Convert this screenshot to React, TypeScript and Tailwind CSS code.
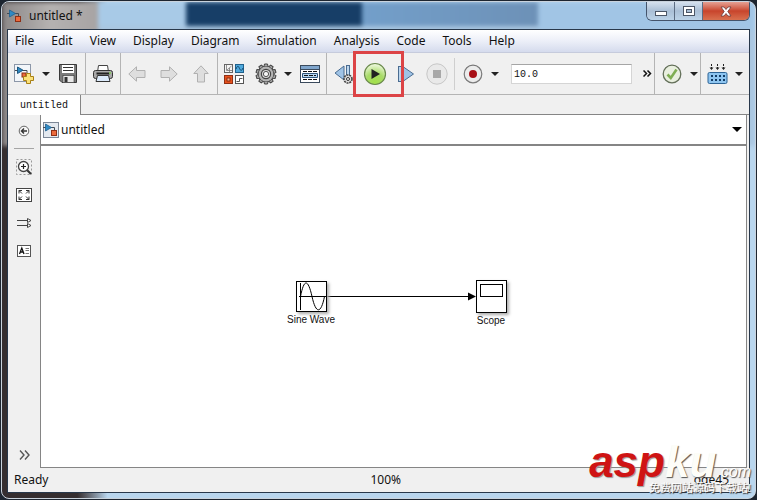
import { useState } from 'react';
import type { ReactNode } from 'react';

const MENUS = [
  'File',
  'Edit',
  'View',
  'Display',
  'Diagram',
  'Simulation',
  'Analysis',
  'Code',
  'Tools',
  'Help',
];

const GEAR_TEETH = [0, 36, 72, 108, 144, 180, 216, 252, 288, 324];

const ModelIcon = ({ boxed = false }: { boxed?: boolean }) => (
  <svg width="16" height="16" viewBox="0 0 16 16" className="shrink-0" aria-hidden="true">
    {boxed && <rect x=".5" y=".5" width="15" height="15" fill="#e4e9ef" stroke="#7d8796" />}
    <path d="M0 5.500H3M8 5.500H11.500V9" fill="none" stroke="#444b55" />
    <path d="M2.500 2V9L8.500 5.500Z" fill="#2f8ac4" stroke="#1f5f8f" strokeWidth=".8" />
    <rect x="8.500" y="8.500" width="5" height="5" fill="#ec6a3c" stroke="#8f3015" />
  </svg>
);

const NewModelIcon = () => (
  <svg width="20" height="20" viewBox="0 0 20 20" aria-hidden="true">
    <rect x=".5" y=".5" width="16" height="17" fill="#f3f6fa" stroke="#8c97a8" />
    <path d="M1 6.500H4M9 6.500H13V9" fill="none" stroke="#444b55" />
    <path d="M3.500 3V9.500L9 6.200Z" fill="#2f8ac4" stroke="#1c577f" />
    <rect x="8" y="9" width="4" height="4" fill="#ec6a3c" stroke="#8f3015" />
    <path
      d="M12.500 9.500H16.500V12.500H19.500V16.500H16.500V19.500H12.500V16.500H9.500V12.500H12.500Z"
      fill="#fbe27a"
      stroke="#a98116"
    />
  </svg>
);

const SaveIcon = () => (
  <svg width="18" height="19" viewBox="0 0 18 19" aria-hidden="true">
    <path d="M.5.5H17.500V18.500H3L.5 16Z" fill="#7b7b7b" stroke="#3a3a3a" />
    <rect x="3" y="1" width="12" height="8" fill="#fff" />
    <path d="M4 3.500H14M4 6.500H14" stroke="#333" />
    <rect x="4" y="11.500" width="11" height="7" fill="#e8e8e8" stroke="#333" strokeWidth=".6" />
    <rect x="5.500" y="13" width="3" height="5" fill="#333" />
  </svg>
);

const PrintIcon = () => (
  <svg width="20" height="18" viewBox="0 0 20 18" aria-hidden="true">
    <path d="M4.500 7L5.500.5H14.500L15.500 7Z" fill="#fff" stroke="#444" />
    <rect x=".5" y="5.500" width="19" height="8" rx="2" fill="#a8a8a8" stroke="#333" />
    <path d="M3.500 8.500H16.500" stroke="#222" strokeWidth="2" />
    <circle cx="17" cy="8" r="1" fill="#7fcf55" />
    <path d="M4.500 10.500H15.500L17 16.500H3Z" fill="#dceafa" stroke="#333" />
  </svg>
);

const ArrowIcon = ({ turn }: { turn: string }) => (
  <svg width="18" height="18" viewBox="0 0 18 18" className={turn} aria-hidden="true">
    <path d="M.8 9L8.500 1.800V5.500H17V12.500H8.500V16.200Z" fill="#dedede" stroke="#b0b0b0" />
  </svg>
);

const LibraryIcon = () => (
  <svg width="20" height="20" viewBox="0 0 20 20" aria-hidden="true">
    <rect x=".5" y=".5" width="8" height="8" fill="#f4f4f4" stroke="#666" />
    <path d="M2.500 1V6.500H8M3 6L7.500 2M5.500 4V8" fill="none" stroke="#777" strokeWidth=".8" />
    <rect x="11.500" y=".5" width="8" height="8" fill="#4fa9dc" stroke="#20618c" />
    <path d="M12 5C13.500 1 14.500 2 15.500 4.500S18 7 19 4" fill="none" stroke="#12466b" />
    <rect x=".5" y="11.500" width="8" height="8" fill="#e8521e" stroke="#8f3015" />
    <rect x="3" y="14" width="3" height="3" fill="#ffb08a" stroke="#702008" strokeWidth=".8" />
    <rect x="11.500" y="11.500" width="8" height="8" fill="#fff" stroke="#555" />
    <path d="M12.500 17.500H15.500V14.500H18.500" fill="none" stroke="#555" />
  </svg>
);

const GearIcon = () => (
  <svg width="22" height="22" viewBox="-11 -11 22 22" aria-hidden="true">
    {GEAR_TEETH.map((angle) => (
      <path
        key={angle}
        d="M-2.200-7L-1.500-10H1.500L2.200-7Z"
        transform={`rotate(${angle})`}
        fill="#a8a8a8"
        stroke="#444"
      />
    ))}
    <circle r="8" fill="#444" />
    <circle r="7.400" fill="#b4b4b4" />
    <circle r="4.600" fill="#d8d8d8" stroke="#444" strokeWidth="1.200" />
    <circle r="2.600" fill="#f6f6f6" stroke="#555" />
  </svg>
);

const ExplorerIcon = () => (
  <svg width="20" height="18" viewBox="0 0 20 18" aria-hidden="true">
    <rect x=".5" y=".5" width="19" height="17" fill="#fff" stroke="#3a4a5c" />
    <rect x="1" y="1" width="18" height="3" fill="#7fa5cc" />
    <path d="M1 4.500H19" stroke="#3a4a5c" />
    <path d="M3 6.500H17M3 14.500H17" stroke="#111" strokeDasharray="4 1" />
    <path d="M2.500 8.500H17.500V12.500H2.500Z" fill="#b8d8f2" stroke="#31567a" />
    <path d="M4 10.500H16" stroke="#111" strokeDasharray="4 1" />
  </svg>
);

const StepBackIcon = () => (
  <svg width="20" height="20" viewBox="0 0 20 20" aria-hidden="true">
    <path d="M10 2V16L1 9Z" fill="#9fc3e6" stroke="#4a6c91" />
    <rect x="12.500" y="1.500" width="3" height="13" fill="#bcd6ee" stroke="#4a6c91" />
    <circle cx="14" cy="15" r="4" fill="#ddd" stroke="#444" strokeWidth="1.600" strokeDasharray="2 .8" />
    <circle cx="14" cy="15" r="1.500" fill="#fff" stroke="#333" />
  </svg>
);

const RunIcon = () => (
  <svg width="24" height="24" viewBox="0 0 24 24" aria-hidden="true">
    <defs>
      <radialGradient id="run" cx=".5" cy=".9" r=".9">
        <stop offset="0" stopColor="#a2e04a" />
        <stop offset=".5" stopColor="#a9db6a" />
        <stop offset="1" stopColor="#f3fbe6" />
      </radialGradient>
    </defs>
    <circle cx="12" cy="12" r="10.500" fill="url(#run)" stroke="#6a8a4c" strokeWidth="1.200" />
    <path d="M8.500 7L17 12L8.500 17Z" fill="#222" />
  </svg>
);

const StepForwardIcon = () => (
  <svg width="18" height="18" viewBox="0 0 18 18" aria-hidden="true">
    <rect x="1.500" y="1.500" width="3" height="15" fill="#bcd6ee" stroke="#4a6c91" />
    <path d="M6.500 2V16L16.500 9Z" fill="#9fc3e6" stroke="#4a6c91" />
  </svg>
);

const StopIcon = () => (
  <svg width="22" height="22" viewBox="0 0 22 22" aria-hidden="true">
    <circle cx="11" cy="11" r="10.200" fill="#e9e9e9" stroke="#c6c6c6" />
    <rect x="7" y="7" width="8" height="8" fill="#a8a8a8" />
  </svg>
);

const RecordIcon = () => (
  <svg width="20" height="20" viewBox="0 0 20 20" aria-hidden="true">
    <circle cx="10" cy="10" r="8.800" fill="#ececec" stroke="#7a7a7a" strokeWidth="1.200" />
    <circle cx="10" cy="10" r="4" fill="#a80f16" />
  </svg>
);

const CheckIcon = () => (
  <svg width="20" height="20" viewBox="0 0 20 20" aria-hidden="true">
    <circle cx="10" cy="10" r="8.800" fill="#e9efdf" stroke="#64705a" strokeWidth="1.300" />
    <path d="M5.500 10.500L8.800 14L14.500 5.500" fill="none" stroke="#7fae52" strokeWidth="2.600" />
  </svg>
);

const BuildIcon = () => (
  <svg width="21" height="20" viewBox="0 0 21 20" aria-hidden="true">
    <path d="M4.500 0V5M10.500 0V5M16.500 0V5" stroke="#222" strokeDasharray="2 1" />
    <path d="M2.500 3.500H6.500L4.500 6ZM8.500 3.500H12.500L10.500 6ZM14.500 3.500H18.500L16.500 6Z" fill="#222" />
    <rect x="1" y="8.500" width="19" height="11" rx="1.500" fill="#8ec5f0" stroke="#2d6496" />
    <path d="M4 12H18M4 16H18" stroke="#123c66" strokeWidth="2" strokeDasharray="2 2" />
  </svg>
);

const Caret = () => (
  <svg width="8" height="4" viewBox="0 0 8 4" aria-hidden="true">
    <path d="M0 0H8L4 4Z" fill="#222" />
  </svg>
);

const BackIcon = () => (
  <svg width="12" height="12" viewBox="0 0 12 12" aria-hidden="true">
    <circle cx="6" cy="6" r="4.800" fill="#f6f6f6" stroke="#666" />
    <path d="M9 6H4M6 3.500L3.500 6L6 8.500" fill="none" stroke="#333" strokeWidth="1.400" />
  </svg>
);

const ZoomIcon = () => (
  <svg width="16" height="16" viewBox="0 0 16 16" aria-hidden="true">
    <rect x=".5" y=".5" width="15" height="15" fill="none" stroke="#999" strokeDasharray="2 2" />
    <circle cx="7.500" cy="7.500" r="5" fill="#fff" stroke="#444" strokeWidth="1.300" />
    <path d="M5 7.500H10M7.500 5V10" stroke="#222" strokeWidth="1.200" />
    <path d="M11.200 11.200L15 15" stroke="#333" strokeWidth="2" />
  </svg>
);

const FitIcon = () => (
  <svg width="16" height="14" viewBox="0 0 16 14" aria-hidden="true">
    <rect x=".5" y=".5" width="15" height="13" fill="#fff" stroke="#444" />
    <path
      d="M3 5.500V2.500H6M3 2.500L6 5.500M10 2.500H13V5.500M13 2.500L10 5.500M3 8.500V11.500H6M3 11.500L6 8.500M13 8.500V11.500H10M13 11.500L10 8.500"
      fill="none"
      stroke="#333"
    />
  </svg>
);

const SignalIcon = () => (
  <svg width="15" height="12" viewBox="0 0 15 12" aria-hidden="true">
    <path d="M0 3.500H11M0 8.500H11" stroke="#444" />
    <path d="M10.500 1.500L14 3.500L10.500 5.500ZM10.500 6.500L14 8.500L10.500 10.500Z" fill="#fff" stroke="#444" />
  </svg>
);

const AnnotationIcon = () => (
  <svg width="14" height="12" viewBox="0 0 14 12" aria-hidden="true">
    <rect x=".5" y=".5" width="13" height="11" fill="#fff" stroke="#555" />
    <path d="M2.500 9L4.800 3L7 9M3.300 7H6.300" fill="none" stroke="#111" strokeWidth="1.300" />
    <path d="M8.500 3.500H12M8.500 5.500H12M8.500 8.500H12" stroke="#555" strokeWidth=".8" />
  </svg>
);

const ToolButton = ({
  label,
  children,
  width = 'w-8',
  disabled = false,
}: {
  label: string;
  children: ReactNode;
  width?: string;
  disabled?: boolean;
}) => (
  <button
    type="button"
    aria-label={label}
    disabled={disabled}
    className={`flex h-8 shrink-0 items-center justify-center ${width}`}
  >
    {children}
  </button>
);

const ToolGroup = ({ children, className = '' }: { children: ReactNode; className?: string }) => (
  <div className={`flex items-center border-r border-[#b4b4b4] ${className}`}>{children}</div>
);

const TitleBar = () => (
  <header className="flex h-[27px] shrink-0 justify-between">
    <div className="flex items-center gap-1.5">
      <ModelIcon />
      <h1 className="text-xs">untitled *</h1>
    </div>
    <div className="flex h-[19px] overflow-hidden rounded-b-md border border-t-0 border-[#44546b]">
      <button
        type="button"
        aria-label="Minimize"
        className="flex w-7 items-center justify-center border-r border-[#5c6c82] bg-linear-to-b from-[#d5e1ee] via-[#aabfd6] to-[#bcd3e8]"
      >
        <svg width="12" height="5" viewBox="0 0 12 5" className="mt-1" aria-hidden="true">
          <rect x=".5" y=".5" width="11" height="4" fill="#fff" stroke="#4c5666" />
        </svg>
      </button>
      <button
        type="button"
        aria-label="Maximize"
        className="flex w-7 items-center justify-center border-r border-[#5c6c82] bg-linear-to-b from-[#d5e1ee] via-[#aabfd6] to-[#bcd3e8]"
      >
        <svg width="12" height="10" viewBox="0 0 12 10" aria-hidden="true">
          <rect x=".5" y=".5" width="11" height="9" fill="#fff" stroke="#4c5666" />
          <rect x="3.500" y="3.500" width="5" height="3" fill="#a9bed5" stroke="#4c5666" />
        </svg>
      </button>
      <button
        type="button"
        aria-label="Close"
        className="flex w-[46px] items-center justify-center bg-linear-to-b from-[#e5a093] via-[#c8442c] to-[#d8704f]"
      >
        <svg width="12" height="11" viewBox="0 0 12 11" aria-hidden="true">
          <path
            d="M1 1H4L6 3.500L8 1H11L7.800 5.500L11 10H8L6 7.500L4 10H1L4.200 5.500Z"
            fill="#fff"
            stroke="#6b3a3a"
            strokeWidth=".8"
          />
        </svg>
      </button>
    </div>
  </header>
);

const MenuBar = () => (
  <nav className="flex h-[23px] shrink-0 items-center gap-[17px] border-b border-[#c6cbdc] bg-linear-to-b from-white via-[#eceff8] to-[#d5dbed] px-[7px]">
    {MENUS.map((name) => (
      <button key={name} type="button" className="text-xs">
        {name}
      </button>
    ))}
  </nav>
);

const Toolbar = () => {
  const [stopTime, setStopTime] = useState('10.0');

  return (
    <div className="flex h-[42px] shrink-0 border-b border-[#b4b4b4] bg-[#f0f0f0]">
      <ToolGroup className="pr-px">
        <ToolButton label="New model"><NewModelIcon /></ToolButton>
        <ToolButton label="New options" width="w-3"><Caret /></ToolButton>
        <ToolButton label="Save"><SaveIcon /></ToolButton>
      </ToolGroup>
      <ToolGroup className="px-px">
        <ToolButton label="Print"><PrintIcon /></ToolButton>
      </ToolGroup>
      <ToolGroup>
        <ToolButton label="Back" disabled><ArrowIcon turn="rotate-0" /></ToolButton>
        <ToolButton label="Forward" disabled><ArrowIcon turn="rotate-180" /></ToolButton>
        <ToolButton label="Up to parent" disabled><ArrowIcon turn="rotate-90" /></ToolButton>
      </ToolGroup>
      <ToolGroup>
        <ToolButton label="Library browser"><LibraryIcon /></ToolButton>
        <ToolButton label="Model configuration"><GearIcon /></ToolButton>
        <ToolButton label="Configuration options" width="w-3"><Caret /></ToolButton>
        <ToolButton label="Model explorer"><ExplorerIcon /></ToolButton>
      </ToolGroup>
      <ToolGroup className="flex-1 pl-px">
        <ToolButton label="Step back" width="w-[31px]"><StepBackIcon /></ToolButton>
        <div className="relative">
          <ToolButton label="Run" width="w-[31px]"><RunIcon /></ToolButton>
          <div className="pointer-events-none absolute -inset-y-[7px] -right-3.5 -left-1.5 z-10 border-3 border-[#dc4446]" />
        </div>
        <ToolButton label="Step forward" width="w-[31px]"><StepForwardIcon /></ToolButton>
        <ToolButton label="Stop" width="w-[31px]" disabled><StopIcon /></ToolButton>
        <div className="mx-0.5 h-8 w-px bg-[#cfcfcf]" />
        <ToolButton label="Record"><RecordIcon /></ToolButton>
        <ToolButton label="Record options" width="w-3"><Caret /></ToolButton>
        <input
          type="text"
          aria-label="Simulation stop time"
          value={stopTime}
          onChange={(e) => setStopTime(e.target.value)}
          className="ml-2.5 h-5 w-[121px] border border-[#d5d5d5] border-t-[#a5a5a5] bg-white px-0.5 pt-0.5 font-['Liberation_Mono',monospace] text-[10px]"
        />
        <button type="button" aria-label="More tools" className="flex flex-1 justify-end pr-0.5">
          <svg width="9" height="7" viewBox="0 0 9 7" aria-hidden="true">
            <path d="M.5.5L3.500 3.500L.5 6.500M4.500.5L7.500 3.500L4.500 6.500" fill="none" stroke="#111" strokeWidth="1.500" />
          </svg>
        </button>
      </ToolGroup>
      <ToolGroup className="pl-px">
        <ToolButton label="Check model"><CheckIcon /></ToolButton>
        <ToolButton label="Check options" width="w-3"><Caret /></ToolButton>
      </ToolGroup>
      <div className="flex items-center pr-1">
        <ToolButton label="Build model"><BuildIcon /></ToolButton>
        <ToolButton label="Build options" width="w-3"><Caret /></ToolButton>
      </div>
    </div>
  );
};

const Palette = () => (
  <aside className="flex w-8 shrink-0 flex-col items-center bg-[#f0f0f0]">
    <button type="button" aria-label="Hide browser" className="flex h-8 items-center">
      <BackIcon />
    </button>
    <div className="mt-px mb-1 h-px w-5 bg-[#a5a5a5]" />
    <button type="button" aria-label="Zoom" className="flex h-7 items-center"><ZoomIcon /></button>
    <button type="button" aria-label="Fit to view" className="flex h-7 items-center"><FitIcon /></button>
    <button type="button" aria-label="Sample time" className="flex h-7 items-center"><SignalIcon /></button>
    <button type="button" aria-label="Annotation" className="flex h-7 items-center"><AnnotationIcon /></button>
    <button type="button" aria-label="More palette items" className="mt-auto mb-2">
      <svg width="11" height="10" viewBox="0 0 11 10" aria-hidden="true">
        <path d="M1 .5L5 5L1 9.500M6 .5L10 5L6 9.500" fill="none" stroke="#555" strokeWidth="1.400" />
      </svg>
    </button>
  </aside>
);

const Canvas = () => (
  <main className="relative flex-1 overflow-hidden bg-white font-['Liberation_Sans',Arial,sans-serif] text-[10px] leading-3">
    <svg className="absolute top-[145px] left-[286px]" width="150" height="10" viewBox="0 0 150 10" aria-hidden="true">
      <path d="M0 5.500H142" stroke="#000" />
      <path d="M141 1.500L149 5.500L141 9.500Z" fill="#000" />
    </svg>
    <figure className="absolute top-[135px] left-[230px] flex w-20 flex-col items-center gap-0.5">
      <svg width="31" height="31" viewBox="0 0 31 31" className="shadow-[2px_2px_3px_#aaa]" aria-hidden="true">
        <rect x=".5" y=".5" width="30" height="30" fill="#fff" stroke="#000" />
        <path d="M4.500 2V29M3 15.500H31" stroke="#000" />
        <path d="M4.500 15.500C8-2.500 12-2.500 16 15.500S25 33 28.500 15.500" fill="none" stroke="#000" />
      </svg>
      <figcaption>Sine Wave</figcaption>
    </figure>
    <figure className="absolute top-[134px] left-[410px] flex w-20 flex-col items-center gap-0.5">
      <svg width="31" height="33" viewBox="0 0 31 33" className="shadow-[2px_2px_3px_#aaa]" aria-hidden="true">
        <rect x=".5" y=".5" width="30" height="32" fill="#fff" stroke="#000" />
        <rect x="4.500" y="4.500" width="22" height="12" fill="#fff" stroke="#000" />
      </svg>
      <figcaption>Scope</figcaption>
    </figure>
  </main>
);

const Watermark = () => (
  <div className="pointer-events-none absolute right-1.5 bottom-1.5 z-20 flex flex-col items-end font-['Liberation_Sans','Noto_Sans_CJK_SC',sans-serif] whitespace-nowrap">
    <div className="flex h-10 items-baseline leading-10 italic">
      <span className="text-[44px] font-bold text-[#cf1414] [text-shadow:1px_1px_1px_#999]">asp</span>
      <span className="text-[44px] font-bold text-[#fdfdf8] [text-shadow:1px_1px_1px_#555]">ku</span>
      <span className="text-base/10 text-white [text-shadow:1px_1px_1px_#555]">.com</span>
    </div>
    <div className="text-[11px] leading-3 text-white [text-shadow:1px_1px_1px_#333]">
      免费网站源码下载站!
    </div>
  </div>
);

const App = () => {
  const [path, setPath] = useState('untitled');

  return (
    <div className="relative flex h-screen flex-col overflow-hidden bg-[#1d2530] p-px font-['Noto_Sans','Open_Sans',sans-serif] text-[#111]">
      <div className="relative flex flex-1 flex-col overflow-hidden rounded-lg border border-[#c9d3dd] bg-linear-to-r from-[#352e30] from-10% to-[#b9d6ee] to-14% px-[5px] pb-[5px]">
        {/* desktop seen through the glass frame */}
        <div className="absolute inset-x-0 top-0 flex h-36 bg-[#a9c6e0] blur-[2px]">
          <div className="h-full w-24 bg-linear-to-r from-[#8b8787] via-[#b5b2b1] to-[#a7a3a3]" />
          <div className="h-6 w-[88px] bg-[#a8cae7]" />
          <div className="h-6 w-44 bg-[#173e67]" />
          <div className="h-6 w-44 bg-linear-to-r from-[#739fca] to-[#6d91b7]" />
          <div className="h-7 flex-1 bg-[#a1c5e5]" />
        </div>
        <div className="relative flex flex-1 flex-col">
          <TitleBar />
          <div className="flex flex-1 flex-col border border-[#28384b] bg-[#f0f0f0]">
            <MenuBar />
            <Toolbar />
            <div role="tablist" className="flex h-5 shrink-0 border-b border-[#858585]">
              <button
                type="button"
                role="tab"
                aria-selected="true"
                className="-mb-px border-r border-[#858585] bg-white px-3 font-['Liberation_Mono',monospace] text-[10px]"
              >
                untitled
              </button>
            </div>
            <div className="flex flex-1">
              <Palette />
              <div className="mr-0.5 flex flex-1 flex-col border border-t-0 border-[#858585]">
                <div className="relative flex h-[31px] shrink-0 items-center gap-0.5 border-b-2 border-[#858585] bg-white px-0.5">
                  <ModelIcon boxed />
                  <select
                    aria-label="Model path"
                    value={path}
                    onChange={(e) => setPath(e.target.value)}
                    className="h-full flex-1 appearance-none bg-transparent text-xs"
                  >
                    <option value="untitled">untitled</option>
                  </select>
                  <svg
                    width="10"
                    height="5"
                    viewBox="0 0 10 5"
                    className="pointer-events-none absolute right-1 bottom-3"
                    aria-hidden="true"
                  >
                    <path d="M0 0H10L5 5Z" fill="#000" />
                  </svg>
                </div>
                <Canvas />
              </div>
            </div>
            <footer className="grid h-6 shrink-0 grid-cols-[12fr_2fr_11fr] items-center pr-5 pl-1.5 text-xs">
              <span>Ready</span>
              <span className="text-center">100%</span>
              <span className="text-right">ode45</span>
            </footer>
          </div>
        </div>
      </div>
      <Watermark />
    </div>
  );
};

export default App;
